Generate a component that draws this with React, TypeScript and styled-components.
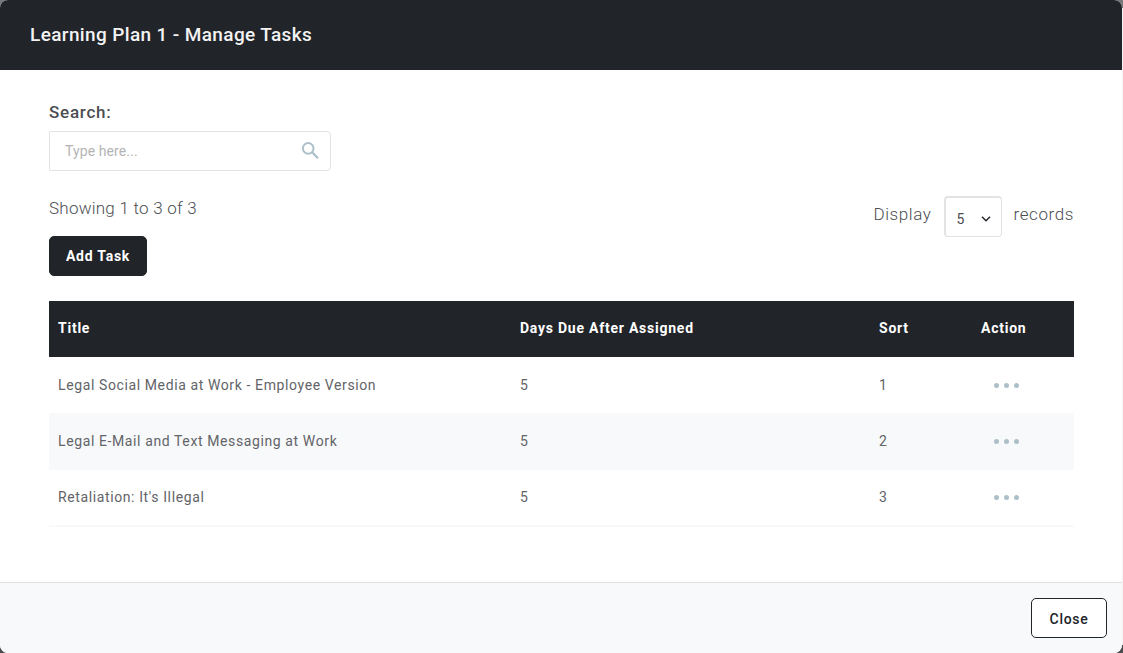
import React from 'react';
import styled, { createGlobalStyle } from 'styled-components';

const ink = '#212429';
const bodyText = '#4c4e52';
const line = '#e2e3e5';
const accent = '#adbfc9';
const tint = '#f8f9fb';

const GlobalStyle = createGlobalStyle`
  *, *::before, *::after { box-sizing: border-box; }
  body {
    margin: 0;
    background: #555659;
    font-family: Roboto, "Liberation Sans", sans-serif;
    color: ${bodyText};
  }
`;

const Backdrop = styled.div`
  height: 653px;
  padding-right: 1px;
  overflow: hidden;
  background: linear-gradient(#77787a 0 8px, #f4f4f5 8px 645px, #4a4b4d 645px);
`;

const Modal = styled.section`
  display: flex;
  flex-direction: column;
  height: 653px;
  border-radius: 8px;
  overflow: hidden;
  background: #fff;
`;

const Header = styled.header`
  display: flex;
  align-items: center;
  height: 70px;
  padding: 0 30px;
  background: ${ink};
`;

const Heading = styled.h1`
  margin: 0;
  color: #f3f3f3;
  font-size: 19px;
  font-weight: 500;
  line-height: 24px;
  letter-spacing: 0.37px;
`;

const Content = styled.main`
  flex: 1;
  padding: 30px 48px 0 49px;
`;

const Label = styled.label`
  display: block;
  height: 31px;
  font-size: 17px;
  font-weight: 500;
  line-height: 25px;
  letter-spacing: 0.75px;
`;

const SearchBox = styled.div`
  display: flex;
  align-items: center;
  justify-content: space-between;
  width: 282px;
  height: 40px;
  padding: 0 11px 0 15px;
  border: 1px solid ${line};
  border-radius: 1px 4px 4px 1px;
`;

const SearchInput = styled.input`
  width: 200px;
  padding: 0;
  border: 0;
  outline: 0;
  background: none;
  font: 400 14px/20px Roboto, "Liberation Sans", sans-serif;
  letter-spacing: 0.1px;
  &::placeholder { color: #b4b4b4; opacity: 1; }
`;

const Toolbar = styled.div`
  display: flex;
  justify-content: space-between;
  height: 130px;
  padding-top: 25px;
`;

const Summary = styled.p`
  margin: 0 0 15px;
  font-size: 17px;
  font-weight: 300;
  line-height: 25px;
  letter-spacing: 0.24px;
`;

const Button = styled.button<{ $outline?: boolean }>`
  display: block;
  width: ${p => (p.$outline ? 76 : 98)}px;
  height: 40px;
  padding: ${p => (p.$outline ? '2px 0 0' : '0')};
  border: 1px solid ${ink};
  border-radius: 5px;
  background: ${p => (p.$outline ? '#fff' : ink)};
  color: ${p => (p.$outline ? ink : '#fff')};
  font: ${p => (p.$outline ? 500 : 700)} 14px/20px Roboto, "Liberation Sans", sans-serif;
  letter-spacing: ${p => (p.$outline ? 0.7 : 0.75)}px;
`;

const PageSize = styled.div`
  display: flex;
  gap: 12px;
  font-size: 17px;
  font-weight: 300;
  line-height: 37px;
  letter-spacing: 0.6px;
`;

const Select = styled.div`
  display: flex;
  align-items: center;
  justify-content: space-between;
  width: 58px;
  height: 41px;
  padding: 4px 10px 0 11px;
  border: 1px solid ${line};
  border-top-width: 2px;
  border-left-width: 2px;
  border-radius: 4px;
  font-size: 14px;
  font-weight: 400;
  line-height: 20px;
`;

const Table = styled.table`
  width: 100%;
  table-layout: fixed;
  border-collapse: collapse;
`;

const HeadRow = styled.tr`
  height: 56px;
  background: ${ink};
`;

const HeadCell = styled.th<{ $width?: number }>`
  width: ${p => (p.$width ? `${p.$width}px` : 'auto')};
  padding: 0 9px 2px;
  color: #fff;
  font-size: 14px;
  font-weight: 700;
  line-height: 20px;
  letter-spacing: 0.76px;
  text-align: left;
`;

const Row = styled.tr`
  height: 56px;
  box-shadow: 0 1px ${tint};
  &:nth-child(even) { background: ${tint}; }
  &:last-child { box-shadow: 0 2px ${tint}; }
`;

const Cell = styled.td`
  padding: 0 9px;
  color: #626468;
  font-size: 14px;
  font-weight: 400;
  line-height: 20px;
  letter-spacing: 0.61px;
`;

const Dots = styled.div`
  display: flex;
  gap: 5px;
  padding: 1px 0 0 13px;
`;

const Dot = styled.span`
  width: 5px;
  height: 5px;
  border-radius: 50%;
  background: ${accent};
`;

const Footer = styled.footer`
  display: flex;
  justify-content: flex-end;
  height: 71px;
  padding: 15px 15px 0;
  border-top: 1px solid #dfe1e3;
  background: ${tint};
`;

const tasks = [
  { title: 'Legal Social Media at Work - Employee Version', days: 5, sort: 1 },
  { title: 'Legal E-Mail and Text Messaging at Work', days: 5, sort: 2 },
  { title: "Retaliation: It's Illegal", days: 5, sort: 3 },
];

const SearchIcon = () => (
  <svg width="18" height="18" viewBox="0 0 18 18" fill="none" stroke={accent} strokeWidth="2">
    <circle cx="7.2" cy="6.4" r="5.3" />
    <path d="M11.1 10.3L17 16.2" strokeWidth="2.3" />
  </svg>
);

const ChevronIcon = () => (
  <svg width="10" height="6" viewBox="0 0 10 6" fill="none" stroke={ink} strokeWidth="1.4">
    <path d="M1 0.8L5 4.8L9 0.8" />
  </svg>
);

export default function App() {
  return (
    <Backdrop>
      <GlobalStyle />
      <Modal>
        <Header>
          <Heading>Learning Plan 1 - Manage Tasks</Heading>
        </Header>
        <Content>
          <Label htmlFor="search">Search:</Label>
          <SearchBox>
            <SearchInput id="search" placeholder="Type here..." />
            <SearchIcon />
          </SearchBox>
          <Toolbar>
            <div>
              <Summary>Showing 1 to 3 of 3</Summary>
              <Button>Add Task</Button>
            </div>
            <PageSize>
              <span>Display</span>
              <Select>
                5
                <ChevronIcon />
              </Select>
              <span>records</span>
            </PageSize>
          </Toolbar>
          <Table>
            <thead>
              <HeadRow>
                <HeadCell $width={462}>Title</HeadCell>
                <HeadCell $width={359}>Days Due After Assigned</HeadCell>
                <HeadCell $width={102}>Sort</HeadCell>
                <HeadCell>Action</HeadCell>
              </HeadRow>
            </thead>
            <tbody>
              {tasks.map(task => (
                <Row key={task.sort}>
                  <Cell>{task.title}</Cell>
                  <Cell>{task.days}</Cell>
                  <Cell>{task.sort}</Cell>
                  <Cell>
                    <Dots>
                      <Dot />
                      <Dot />
                      <Dot />
                    </Dots>
                  </Cell>
                </Row>
              ))}
            </tbody>
          </Table>
        </Content>
        <Footer>
          <Button $outline>Close</Button>
        </Footer>
      </Modal>
    </Backdrop>
  );
}
